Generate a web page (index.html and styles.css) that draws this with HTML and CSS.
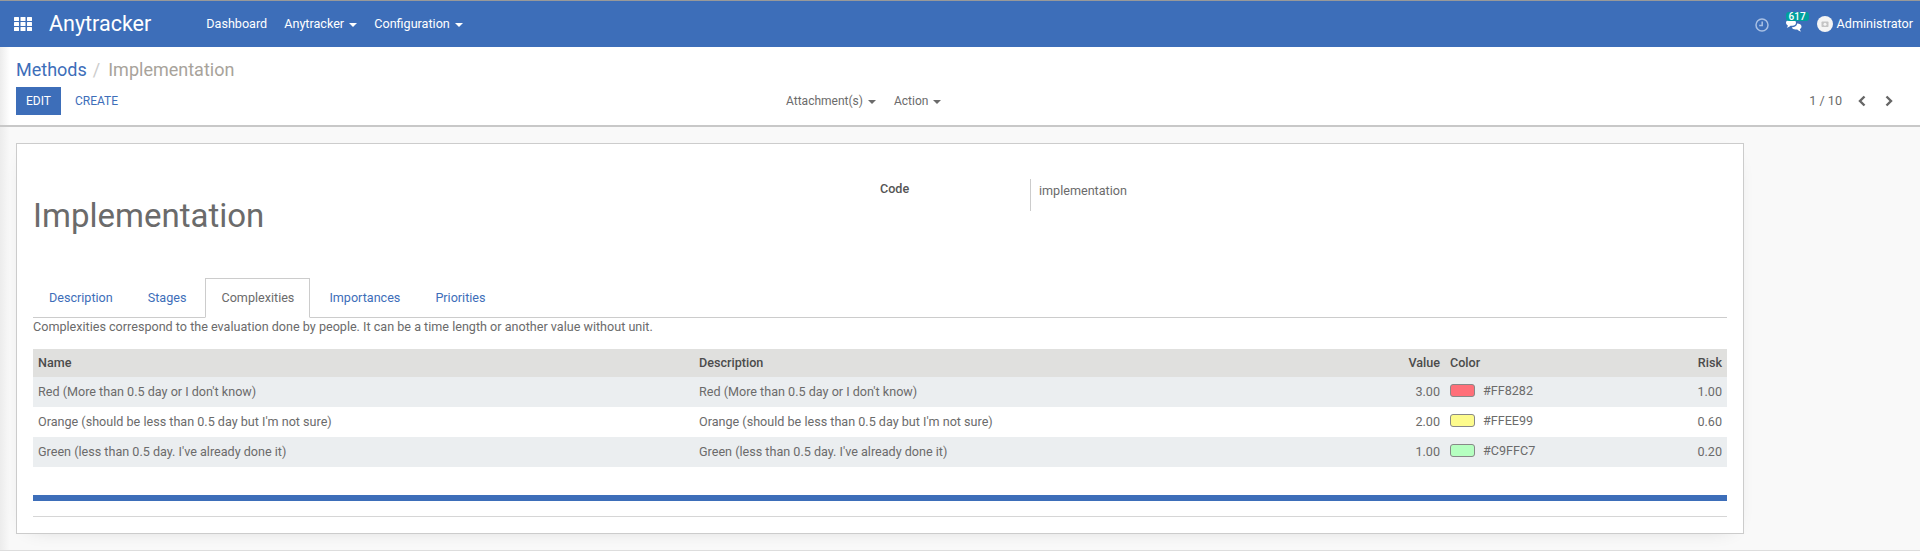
FILE: index.html
```html
<!DOCTYPE html>
<html>
<head>
    <title>Anytracker</title>
    <link rel="stylesheet" href="styles.css">
</head>
<body>
    <nav class="navbar">
        <svg class="apps-icon" width="18" height="14" viewBox="0 0 18 14" fill="#fff">
            <rect x="0" y="0" width="5" height="4" rx="0.5"/><rect x="6.5" y="0" width="5" height="4" rx="0.5"/><rect x="13" y="0" width="5" height="4" rx="0.5"/>
            <rect x="0" y="5" width="5" height="4" rx="0.5"/><rect x="6.5" y="5" width="5" height="4" rx="0.5"/><rect x="13" y="5" width="5" height="4" rx="0.5"/>
            <rect x="0" y="10" width="5" height="4" rx="0.5"/><rect x="6.5" y="10" width="5" height="4" rx="0.5"/><rect x="13" y="10" width="5" height="4" rx="0.5"/>
        </svg>
        <span class="brand">Anytracker</span>
        <ul class="menu">
            <li>Dashboard</li>
            <li>Anytracker <span class="caret"></span></li>
            <li>Configuration <span class="caret"></span></li>
        </ul>
        <div class="systray">
            <svg class="clock-icon" width="14" height="14" viewBox="0 0 14 14" fill="none" stroke="#a9c0e4" stroke-width="1.5">
                <circle cx="7" cy="7" r="6"/>
                <path d="M7.2 3.5V7.4H4.2"/>
            </svg>
            <span class="messages">
                <svg width="17" height="14" viewBox="0 0 17 14" fill="#fff">
                    <path d="M1 3.5C1 2 2.500 1 4.500 1H7.500C9.500 1 11 2 11 3.800C11 5.600 9.500 6.800 7.500 6.800H5.500C4.500 7.900 3 8.500 1.800 8.700C2.500 8 2.900 7.200 2.900 6.500C1.700 6 1 4.900 1 3.500Z"/>
                    <path d="M12 4.500C14.500 4.500 16.500 5.500 16.500 7.500C16.500 8.800 15.800 9.600 14.800 10.100C14.900 11 15.400 11.800 16 12.500C14.600 12.300 13.300 11.600 12.300 10.500H10.500C8.700 10.500 7.200 9.800 6.800 8.300C9.500 8.300 12 7 12 4.500Z"/>
                </svg>
                <span class="badge">617</span>
            </span>
            <span class="user">
                <svg class="avatar" width="16" height="16" viewBox="0 0 16 16">
                    <circle cx="8" cy="8" r="8" fill="#f4f4f4"/>
                    <rect x="4.500" y="5.500" width="7" height="5.500" rx="0.8" fill="#c4c4c4"/>
                    <circle cx="8" cy="8.200" r="1.500" fill="#f4f4f4"/>
                </svg>
                Administrator
            </span>
        </div>
    </nav>

    <header class="control-panel">
        <div class="breadcrumb">
            <a>Methods</a><span class="sep">/</span><span class="current">Implementation</span>
        </div>
        <div class="cp-row">
            <div class="cp-buttons">
                <button class="btn-primary">EDIT</button>
                <button class="btn-link">CREATE</button>
            </div>
            <div class="cp-sidebar">
                <span>Attachment(s) <span class="caret"></span></span>
                <span>Action <span class="caret"></span></span>
            </div>
            <div class="pager">
                <span class="pager-value">1 / 10</span>
                <svg width="10" height="12" viewBox="0 0 10 12" fill="none" stroke="#666" stroke-width="2.400"><path d="M7.500 1.500L3 6L7.500 10.500"/></svg>
                <svg width="10" height="12" viewBox="0 0 10 12" fill="none" stroke="#666" stroke-width="2.400"><path d="M2.500 1.500L7 6L2.500 10.500"/></svg>
            </div>
        </div>
    </header>

    <main class="content">
        <div class="sheet">
            <div class="head-row">
                <h1>Implementation</h1>
                <div class="code-label">Code</div>
                <div class="code-value">implementation</div>
            </div>

            <ul class="tabs">
                <li>Description</li>
                <li>Stages</li>
                <li class="active">Complexities</li>
                <li>Importances</li>
                <li>Priorities</li>
            </ul>
            <p class="tab-note">Complexities correspond to the evaluation done by people. It can be a time length or another value without unit.</p>

            <table class="grid">
                <thead>
                    <tr>
                        <th class="col-name">Name</th>
                        <th class="col-desc">Description</th>
                        <th class="col-value num">Value</th>
                        <th class="col-color">Color</th>
                        <th class="num">Risk</th>
                    </tr>
                </thead>
                <tbody>
                    <tr>
                        <td>Red (More than 0.5 day or I don't know)</td>
                        <td>Red (More than 0.5 day or I don't know)</td>
                        <td class="num">3.00</td>
                        <td><span class="swatch swatch-red"></span><span class="hex">#FF8282</span></td>
                        <td class="num">1.00</td>
                    </tr>
                    <tr>
                        <td>Orange (should be less than 0.5 day but I'm not sure)</td>
                        <td>Orange (should be less than 0.5 day but I'm not sure)</td>
                        <td class="num">2.00</td>
                        <td><span class="swatch swatch-yellow"></span><span class="hex">#FFEE99</span></td>
                        <td class="num">0.60</td>
                    </tr>
                    <tr>
                        <td>Green (less than 0.5 day. I've already done it)</td>
                        <td>Green (less than 0.5 day. I've already done it)</td>
                        <td class="num">1.00</td>
                        <td><span class="swatch swatch-green"></span><span class="hex">#C9FFC7</span></td>
                        <td class="num">0.20</td>
                    </tr>
                </tbody>
            </table>

            <div class="blue-bar"></div>
            <div class="sheet-line"></div>
        </div>
    </main>
    <div class="page-end"></div>
</body>
</html>
```

FILE: styles.css
```css
* {
    box-sizing: border-box;
}

html, body {
    height: 100%;
}

body {
    margin: 0;
    display: flex;
    flex-direction: column;
    overflow: hidden;
    font-family: Roboto, "Liberation Sans", sans-serif;
    font-size: 12.6px;
    line-height: 18px;
    color: #6b6b6b;
    background-color: #f9f9f9;
}

ul {
    list-style: none;
    margin: 0;
    padding: 0;
}

.caret {
    display: inline-block;
    width: 0;
    height: 0;
    margin-left: 2px;
    vertical-align: middle;
    border-top: 4px solid;
    border-left: 4px solid transparent;
    border-right: 4px solid transparent;
}

/* top bar */
.navbar {
    display: flex;
    align-items: center;
    height: 47px;
    flex: none;
    padding-left: 14px;
    padding-right: 7px;
    color: #fff;
    background-color: #3d6eb9;
    border-top: 1px solid #999;
}

.brand {
    margin-left: 17px;
    font-size: 21.5px;
}

.menu {
    display: flex;
    gap: 17px;
    margin-left: 55px;
}

.systray {
    display: flex;
    align-items: center;
    margin-left: auto;
}

.clock-icon {
    margin-top: 2px;
}

.messages {
    position: relative;
    display: flex;
    margin-left: 16px;
    margin-top: 3px;
}

.badge {
    position: absolute;
    top: -7px;
    left: 1px;
    padding: 0 3px;
    font-size: 10px;
    font-weight: 500;
    line-height: 9px;
    border-radius: 3px;
    background-color: #00a09d;
}

.user {
    display: flex;
    align-items: center;
    gap: 4px;
    margin-left: 15px;
}

/* breadcrumb and buttons */
.control-panel {
    flex: none;
    height: 80px;
    padding: 9px 16px 0;
    background-color: #fff;
    background-image: linear-gradient(to right, #ececec, rgba(236, 236, 236, 0) 10px);
    border-bottom: 2px solid #c8c8c8;
}

.breadcrumb {
    font-size: 18px;
    line-height: 28px;
    height: 31px;
}

.breadcrumb a {
    color: #3d6eb9;
}

.sep {
    margin: 0 8px 0 6px;
    color: #ccc;
}

.current {
    color: #a8a39b;
}

.cp-row {
    position: relative;
    display: flex;
    align-items: center;
    height: 28px;
}

.cp-buttons {
    display: flex;
    gap: 4px;
    font-size: 12px;
}

.cp-buttons button {
    height: 28px;
    padding: 0 10px;
    font-family: inherit;
    font-size: 12px;
    border: none;
    border-radius: 0;
}

.btn-primary {
    color: #fff;
    background-color: #3d6eb9;
}

.btn-link {
    color: #3d6eb9;
    background: none;
}

.cp-sidebar {
    display: flex;
    gap: 18px;
    margin-left: 658px;
    font-size: 12px;
}

.pager {
    display: flex;
    align-items: center;
    margin-left: auto;
    margin-right: 10px;
    gap: 17px;
}

.pager-value {
    margin-right: -2px;
}

/* form sheet */
.content {
    flex: 1;
    padding: 16px 16px 0;
    background-image: linear-gradient(to right, #ececec, rgba(236, 236, 236, 0) 10px);
}

.sheet {
    width: 1728px;
    height: 391px;
    padding: 0 16px;
    background-color: #fff;
    border: 1px solid #ccc;
    box-shadow: 0 5px 20px -15px rgba(0, 0, 0, 0.3);
}

.head-row {
    display: flex;
    height: 134px;
}

h1 {
    width: 847px;
    margin: 52px 0 0;
    font-size: 33px;
    font-weight: 400;
    line-height: 40px;
    color: #6b6b6b;
}

.code-label {
    width: 150px;
    margin-top: 36px;
    font-weight: 500;
    color: #555;
}

.code-value {
    height: 32px;
    margin-top: 35px;
    padding: 3px 8px;
    border-left: 1px solid #ccc;
}

.tabs {
    display: flex;
    gap: 3px;
    height: 40px;
    border-bottom: 1px solid #ccc;
}

.tabs li {
    height: 40px;
    padding: 10px 15px;
    color: #3d6eb9;
    border: 1px solid transparent;
}

.tabs li.active {
    color: #6b6b6b;
    background-color: #fff;
    border-color: #ccc;
    border-bottom-color: #fff;
}

.tab-note {
    margin: 0;
    height: 31px;
    line-height: 18px;
}

.grid {
    width: 100%;
    table-layout: fixed;
    border-collapse: collapse;
}

.grid th, .grid td {
    padding: 0 5px;
    text-align: left;
    white-space: nowrap;
}

.grid th {
    height: 28px;
    font-weight: 500;
    color: #4c4c4c;
    background-color: #e0e0de;
}

.grid td {
    height: 30px;
}

.grid tbody tr:nth-child(odd) {
    background-color: #ebeef0;
}

.grid .num {
    text-align: right;
}

.col-name {
    width: 661px;
}

.col-desc {
    width: 662px;
}

.col-value {
    width: 89px;
}

.col-color {
    width: 200px;
}

.swatch {
    display: inline-block;
    width: 25px;
    height: 13px;
    margin-right: 8px;
    vertical-align: -1px;
    border: 1px solid #888;
    border-radius: 3px;
}

.hex {
    position: relative;
    top: -1px;
}

.swatch-red {
    background-color: #ff6f79;
}

.swatch-yellow {
    background-color: #fdfb8c;
}

.swatch-green {
    background-color: #b5ffc0;
}

.blue-bar {
    height: 6px;
    margin-top: 28px;
    background-color: #3d6eb9;
}

.sheet-line {
    height: 1px;
    margin-top: 15px;
    background-color: #d6d6d6;
}

.page-end {
    flex: none;
    height: 2px;
    background-color: #fff;
    border-top: 1px solid #ddd;
}
```
